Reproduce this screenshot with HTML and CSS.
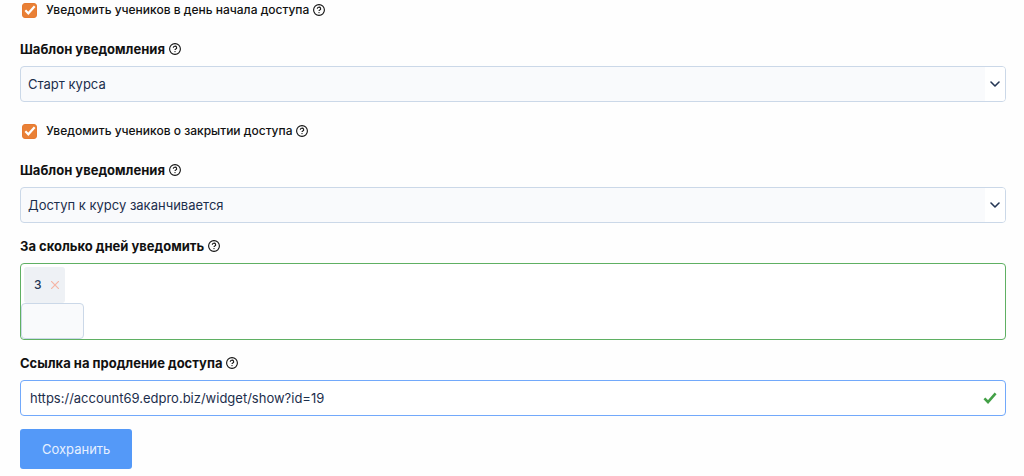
FILE: index.html
```html
<!DOCTYPE html>
<html lang="ru">
<head>
  <meta charset="UTF-8" />
  <meta name="viewport" content="width=device-width, initial-scale=1.0"/>
  <title>Настройки доступа</title>
  <link rel="stylesheet" href="styles.css">
</head>
<body>

  <svg class="sprite" width="0" height="0">
    <symbol id="help" viewBox="0 0 12 12">
      <circle cx="6" cy="6" r="5.4" fill="none" stroke="currentColor" stroke-width="1.1"/>
      <path d="M4.3 4.8a1.7 1.5 0 1 1 2.5 1.2c-.6.3-.8.5-.8 1" fill="none" stroke="currentColor" stroke-width="1.1"/>
      <circle cx="6" cy="8.6" r=".7" fill="currentColor"/>
    </symbol>
    <symbol id="tick" viewBox="0 0 14 12">
      <path d="M1.4 6.4l3.6 3.6L12.6 1.4" fill="none" stroke="currentColor" stroke-width="2.6"/>
    </symbol>
    <symbol id="arrow" viewBox="0 0 10 6">
      <path d="M1 1l4 4 4-4" fill="none" stroke="currentColor" stroke-width="1.6" stroke-linecap="round" stroke-linejoin="round"/>
    </symbol>
  </svg>

  <form class="form">
    <div class="check">
      <span class="check-box">
        <input type="checkbox" id="notifyStart" checked />
        <svg class="check-tick"><use href="#tick"/></svg>
      </span>
      <label for="notifyStart">Уведомить учеников в день начала доступа</label>
      <svg class="help"><use href="#help"/></svg>
    </div>

    <div class="field">
      <div class="field-title">
        <label for="templateStart">Шаблон уведомления</label>
        <svg class="help"><use href="#help"/></svg>
      </div>
      <div class="select">
        <select id="templateStart">
          <option>Старт курса</option>
        </select>
        <span class="select-arrow"><svg><use href="#arrow"/></svg></span>
      </div>
    </div>

    <div class="check">
      <span class="check-box">
        <input type="checkbox" id="notifyEnd" checked />
        <svg class="check-tick"><use href="#tick"/></svg>
      </span>
      <label for="notifyEnd">Уведомить учеников о закрытии доступа</label>
      <svg class="help"><use href="#help"/></svg>
    </div>

    <div class="field">
      <div class="field-title">
        <label for="templateEnd">Шаблон уведомления</label>
        <svg class="help"><use href="#help"/></svg>
      </div>
      <div class="select">
        <select id="templateEnd">
          <option>Доступ к курсу заканчивается</option>
        </select>
        <span class="select-arrow"><svg><use href="#arrow"/></svg></span>
      </div>
    </div>

    <div class="field">
      <div class="field-title">
        <label for="days">За сколько дней уведомить</label>
        <svg class="help"><use href="#help"/></svg>
      </div>
      <div class="tags">
        <span class="tag">
          3
          <button type="button" class="tag-remove" aria-label="Удалить">
            <svg viewBox="0 0 8 8"><path d="M0 0l8 8M8 0L0 8" stroke="currentColor" stroke-width="1.2"/></svg>
          </button>
        </span>
        <input type="text" id="days" class="tags-input" />
      </div>
    </div>

    <div class="field">
      <div class="field-title">
        <label for="link">Ссылка на продление доступа</label>
        <svg class="help"><use href="#help"/></svg>
      </div>
      <div class="link">
        <input type="text" id="link" value="https://account69.edpro.biz/widget/show?id=19" />
        <svg class="link-tick"><use href="#tick"/></svg>
      </div>
    </div>

    <button type="submit" class="save">Сохранить</button>
  </form>

</body>
</html>
```

FILE: styles.css
```css
* {
  box-sizing: border-box;
}
body {
  margin: 0;
  background: #fefefe;
  color: #111;
  font-family: Inter, "Liberation Sans", sans-serif;
  font-size: 13px;
  line-height: 20px;
}
input, select, button {
  margin: 0;
  font: inherit;
}
.sprite {
  position: absolute;
}
.form {
  padding: 0 18px 7px 20px;
}
.help {
  width: 12px;
  height: 12px;
  flex: none;
}

/* checkboxes */
.check {
  display: flex;
  align-items: center;
  gap: 4px;
  margin-bottom: 19px;
  font-size: 12px;
  font-weight: 500;
}
.field + .check {
  margin-top: 19px;
}
.check-box {
  display: grid;
  place-items: center;
  margin: 0 5px 0 2px;
}
.check-box input,
.check-tick {
  grid-area: 1 / 1;
}
.check-box input {
  appearance: none;
  width: 15px;
  height: 15px;
  border: 1px solid #ccd6e2;
  border-radius: 3px;
  background: #fff;
}
.check-box input:checked {
  border-color: #e77a30;
  background: #e98036;
}
.check-tick {
  width: 12px;
  height: 10px;
  color: #fff;
  pointer-events: none;
}

/* fields */
.field {
  margin-bottom: 13px;
}
.field-title {
  display: flex;
  align-items: center;
  gap: 4px;
  margin-bottom: 7px;
  font-weight: 700;
}
.select {
  display: grid;
  grid-template-columns: 1fr 20px;
  height: 36px;
  overflow: hidden;
  border: 1px solid #cbd8e8;
  border-radius: 4px;
  background: #f9fafc;
}
.select select {
  grid-area: 1 / 1 / 2 / 3;
  appearance: none;
  padding: 0 28px 0 7px;
  border: 0;
  background: none;
  color: #1c2e4c;
}
.select-arrow {
  grid-area: 1 / 2;
  display: grid;
  place-items: center;
  background: #fff;
  color: #243654;
  pointer-events: none;
}
.select-arrow svg {
  width: 10px;
  height: 6px;
}

/* days */
.tags {
  display: flex;
  flex-direction: column;
  align-items: flex-start;
  padding-top: 3px;
  border: 1px solid #5fb063;
  border-radius: 4px;
  background: #fff;
}
.tag {
  display: flex;
  align-items: center;
  gap: 9px;
  height: 36px;
  margin-left: 3px;
  padding: 0 6px 0 10px;
  border-radius: 3px;
  background: #eef1f5;
  color: #243654;
  font-size: 12px;
  font-weight: 500;
}
.tag-remove {
  display: flex;
  padding: 0;
  border: 0;
  background: none;
  color: #f5b5a5;
  cursor: pointer;
}
.tag-remove svg {
  width: 8px;
  height: 8px;
}
.tags-input {
  width: 63px;
  height: 36px;
  border: 1px solid #cbd8e8;
  border-radius: 4px;
  background: #f9fafc;
}

/* link */
.link {
  display: flex;
  align-items: center;
  height: 36px;
  padding: 0 8px 0 9px;
  border: 1px solid #72a9fb;
  border-radius: 4px;
  background: #fff;
}
.link input {
  flex: 1;
  padding: 0;
  border: 0;
  outline: 0;
  background: none;
  color: #1c2e4c;
}
.link-tick {
  width: 14px;
  height: 12px;
  color: #43a047;
}

.save {
  height: 40px;
  padding: 0 22px;
  border: 0;
  border-radius: 3px;
  background: #5499f8;
  color: #e6f0ff;
  cursor: pointer;
}
```
